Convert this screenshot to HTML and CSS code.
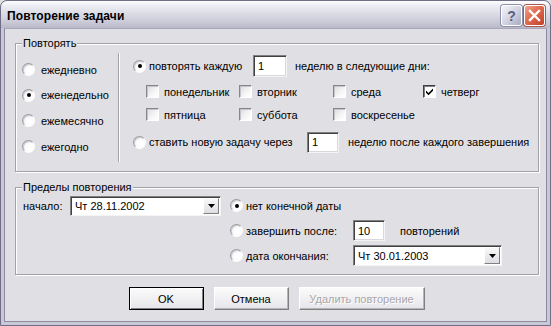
FILE: index.html
```html
<!DOCTYPE html>
<html lang="ru">
<head>
<meta charset="utf-8">
<title>Повторение задачи</title>
<link rel="stylesheet" href="styles.css">
</head>
<body>
<div class="window">
  <div class="titlebar">
    <span class="title">Повторение задачи</span>
    <div class="tb-buttons">
      <span class="tb-btn help">?</span>
      <span class="tb-btn close"><svg width="13" height="13" viewBox="0 0 13 13"><path d="M2 2 L11 11 M11 2 L2 11" stroke="#fff" stroke-width="2.4" stroke-linecap="square"/></svg></span>
    </div>
  </div>
  <div class="client">
    <fieldset class="group g1">
      <legend>Повторять</legend>
      <div class="g1-body">
        <div class="periods">
          <label class="opt"><span class="radio"></span>ежедневно</label>
          <label class="opt"><span class="radio on"></span>еженедельно</label>
          <label class="opt"><span class="radio"></span>ежемесячно</label>
          <label class="opt"><span class="radio"></span>ежегодно</label>
        </div>
        <div class="sep"></div>
        <div class="weekly">
          <div class="row r-every">
            <span class="radio on"></span><span class="lbl l-every">повторять каждую</span><span class="field f-num">1</span><span class="after">неделю в следующие дни:</span>
          </div>
          <div class="days">
            <label class="chk"><span class="box"></span>понедельник</label>
            <label class="chk"><span class="box"></span>вторник</label>
            <label class="chk"><span class="box"></span>среда</label>
            <label class="chk"><span class="box on"><svg width="9" height="9" viewBox="0 0 9 9"><path d="M1 3.5 L3.5 6 L8 1.5 L8 3.8 L3.5 8.2 L1 5.7 Z" fill="#000"/></svg></span>четверг</label>
            <label class="chk"><span class="box"></span>пятница</label>
            <label class="chk"><span class="box"></span>суббота</label>
            <label class="chk"><span class="box"></span>воскресенье</label>
          </div>
          <div class="row r-after">
            <span class="radio"></span><span class="lbl l-after">ставить новую задачу через</span><span class="field f-num2">1</span><span class="after2">неделю после каждого завершения</span>
          </div>
        </div>
      </div>
    </fieldset>
    <fieldset class="group g2">
      <legend>Пределы повторения</legend>
      <div class="g2-body">
        <div class="start">
          <span class="lbl l-start">начало:</span>
          <span class="combo c-start"><span class="combo-text">Чт 28.11.2002</span><span class="drop"><svg width="7" height="4" viewBox="0 0 7 4"><path d="M0 0 H7 L3.5 4 Z" fill="#000"/></svg></span></span>
        </div>
        <div class="ends">
          <div class="erow"><span class="radio on"></span><span class="lbl">нет конечной даты</span></div>
          <div class="erow"><span class="radio"></span><span class="lbl l-end">завершить после:</span><span class="field f-count">10</span><span class="after3">повторений</span></div>
          <div class="erow"><span class="radio"></span><span class="lbl l-end">дата окончания:</span><span class="combo c-end"><span class="combo-text">Чт 30.01.2003</span><span class="drop"><svg width="7" height="4" viewBox="0 0 7 4"><path d="M0 0 H7 L3.5 4 Z" fill="#000"/></svg></span></span></div>
        </div>
      </div>
    </fieldset>
    <div class="buttons">
      <span class="btn default">OK</span>
      <span class="btn">Отмена</span>
      <span class="btn disabled wide">Удалить повторение</span>
    </div>
  </div>
</div>
</body>
</html>
```

FILE: styles.css
```css
* { box-sizing: border-box; }
html, body { margin: 0; padding: 0; }
body {
  width: 551px;
  height: 326px;
  overflow: hidden;
  background: #e0dfe3;
  font-family: "Liberation Sans", Arial, sans-serif;
  font-size: 11px;
  color: #000;
  white-space: nowrap;
}
.window {
  width: 551px;
  height: 326px;
  display: flex;
  flex-direction: column;
  border: 1px solid #6f6e86;
  border-radius: 7px 7px 0 0;
  background: #c8c8d6;
  padding: 0 3px 3px 3px;
  overflow: hidden;
}
.titlebar {
  height: 27px;
  margin: 0 -3px;
  display: flex;
  align-items: center;
  justify-content: space-between;
  padding: 0 5px 0 6px;
  background: linear-gradient(#fdfdfe 0%, #ecedf3 18%, #dcdce6 45%, #cfcfdc 70%, #b9b8ca 100%);
  border-radius: 6px 6px 0 0;
}
.title {
  font-weight: bold;
  font-size: 12px;
  letter-spacing: 0.1px;
  padding-top: 2px;
}
.tb-buttons { display: flex; gap: 2px; padding-top: 2px; }
.tb-btn {
  width: 21px;
  height: 21px;
  border-radius: 3px;
  border: 1px solid #fff;
  display: flex;
  align-items: center;
  justify-content: center;
}
.help {
  background: linear-gradient(135deg, #f3f4f8 0%, #d4d5e2 50%, #a6a8c0 100%);
  color: #5b5d7c;
  font-weight: bold;
  font-size: 14px;
  box-shadow: 0 0 0 1px #8e90aa;
}
.close {
  background: linear-gradient(135deg, #f2a58f 0%, #e06a4f 45%, #c1402a 100%);
  box-shadow: 0 0 0 1px #a8574a;
}
.client {
  flex: 1;
  background: #e0dfe3;
  border: 1px solid #8c8ba0;
  border-top-color: #a9a8bb;
  display: flex;
  flex-direction: column;
}
.group {
  margin: 0 0 0 10px;
  width: 524px;
  padding: 0;
  border: 1px solid #a2a2a8;
  box-shadow: 1px 1px 0 #fff, inset 1px 1px 0 #fff;
  min-width: 0;
}
.group legend {
  margin-left: 6px;
  padding: 0 1px;
  line-height: 14px;
  background: #e0dfe3;
}
.g1 { margin-top: 7px; }
.g1-body {
  height: 121px;
  display: flex;
}
.periods {
  width: 102px;
  padding: 7px 0 0 6px;
  display: flex;
  flex-direction: column;
}
.opt {
  height: 25.6px;
  display: flex;
  align-items: center;
}
.opt .radio { margin-right: 6px; }
.radio {
  width: 13px;
  height: 13px;
  flex: none;
  border-radius: 50%;
  border: 1px solid;
  border-color: #9c9ca4 #fff #fff #9c9ca4;
  background: radial-gradient(circle at 65% 65%, #fff 0%, #fbfbfb 45%, #e4e4e8 100%);
  box-shadow: inset 1px 1px 0 #cfcfd4;
  display: flex;
  align-items: center;
  justify-content: center;
}
.radio.on::after {
  content: "";
  width: 4px;
  height: 4px;
  border-radius: 50%;
  background: #000;
}
.sep {
  width: 2px;
  height: 109px;
  margin-top: 3px;
  border-left: 1px solid #a2a2a8;
  border-right: 1px solid #fff;
}
.weekly {
  flex: 1;
  padding: 5px 0 0 13px;
  display: flex;
  flex-direction: column;
}
.row {
  height: 22px;
  display: flex;
  align-items: center;
}
.row .radio { margin-right: 3px; }
.l-every { width: 104px; }
.l-after { width: 158px; }
.field {
  background: #fff;
  border: 1px solid;
  border-color: #808080 #f4f4f4 #f4f4f4 #808080;
  box-shadow: inset 1px 1px 0 #404040, inset -1px -1px 0 #d8d8dc;
  padding: 0 0 0 4px;
  display: flex;
  align-items: center;
}
.f-num { width: 34px; height: 22px; }
.after { margin-left: 8px; }
.f-num2 { width: 32px; height: 21px; }
.after2 { margin-left: 9px; }
.days {
  margin: 3px 0 0 13px;
  display: grid;
  grid-template-columns: 93px 94px 90px auto;
  grid-auto-rows: 23px;
}
.chk {
  display: flex;
  align-items: center;
}
.box {
  width: 13px;
  height: 13px;
  flex: none;
  margin-right: 5px;
  border: 1px solid;
  border-color: #85858c #fff #fff #85858c;
  background: linear-gradient(135deg, #dcdce0 0%, #f6f6f6 60%, #fff 100%);
  box-shadow: inset 1px 1px 0 #c4c4ca;
  display: flex;
  align-items: center;
  justify-content: center;
}
.box.on {
  background: #fff;
  border-color: #404040 #fff #fff #404040;
  box-shadow: inset 1px 1px 0 #808080;
}
.r-after { margin-top: 5px; }
.g2 { margin-top: 8px; }
.g2-body {
  height: 80px;
  display: flex;
  padding: 1px 0 0 7px;
}
.start {
  display: flex;
  align-items: center;
  height: 21px;
}
.l-start { width: 47px; }
.combo {
  display: flex;
  background: #fff;
  border: 1px solid;
  border-color: #808080 #f4f4f4 #f4f4f4 #808080;
  box-shadow: inset 1px 1px 0 #404040;
  padding: 1px 1px 1px 2px;
}
.c-start { width: 151px; height: 20px; }
.c-end { width: 149px; height: 21px; }
.combo-text {
  flex: 1;
  padding-left: 2px;
  display: flex;
  align-items: center;
}
.drop {
  width: 16px;
  flex: none;
  border: 1px solid;
  border-color: #fff #808080 #808080 #fff;
  background: linear-gradient(#f8f8f8, #dedde2);
  display: flex;
  align-items: center;
  justify-content: center;
}
.ends {
  margin-left: 9px;
  display: flex;
  flex-direction: column;
  gap: 4px;
}
.erow {
  height: 21px;
  display: flex;
  align-items: center;
}
.erow .radio { margin-right: 3px; }
.l-end { width: 107px; }
.f-count { width: 32px; height: 21px; }
.after3 { margin-left: 15px; }
.buttons {
  margin-top: 12px;
  display: flex;
  justify-content: center;
  gap: 10px;
  padding-left: 2px;
}
.btn {
  width: 75px;
  height: 23px;
  display: flex;
  align-items: center;
  justify-content: center;
  font-weight: normal;
  background: linear-gradient(#fbfbfb, #e6e5ea);
  border: 1px solid;
  border-color: #fff #808080 #808080 #fff;
  box-shadow: inset -1px -1px 0 #b4b4bb;
}
.btn.default {
  border: 1px solid #000;
  box-shadow: inset 1px 1px 0 #fff, inset -1px -1px 0 #808080;
}
.btn.wide { width: 126px; }
.btn.disabled { color: #a6a6ab; text-shadow: 1px 1px 0 #fff; }
```
